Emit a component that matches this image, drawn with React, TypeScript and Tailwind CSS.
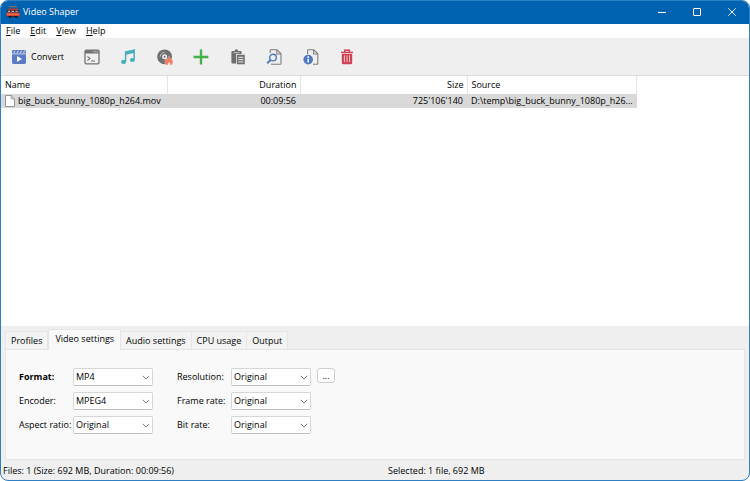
import React, { useState } from 'react';

type IconProps = { children: React.ReactNode; className?: string };

const Icon: React.FC<IconProps> = ({ children, className = '' }) => (
  <svg viewBox="0 0 16 16" fill="none" aria-hidden="true" className={`h-4 w-4 shrink-0 ${className}`}>
    {children}
  </svg>
);

const AppLogo = () => (
  <svg viewBox="0 0 14 14" aria-hidden="true" className="h-[14px] w-[14px] shrink-0">
    <path d="M3 1.6h8" stroke="#8a7464" strokeWidth="1" />
    <path d="M7 1v3" stroke="#8c5a4a" strokeWidth="1" />
    <rect x="1.5" y="3.4" width="11" height="1.8" rx="0.9" fill="#a33a2c" />
    <rect x="1" y="5" width="12" height="2.6" fill="#4a2a30" />
    <path d="M2 6.3h2M5.5 6.3h2.5M9.5 6.3h2" stroke="#a9b4bc" strokeWidth="1.2" />
    <rect x="0.5" y="7.4" width="13" height="3.8" rx="0.6" fill="#e0402f" />
    <path d="M1 9.2h12" stroke="#f0a35a" strokeWidth="0.6" />
    <rect x="1.4" y="11.2" width="11.2" height="1" fill="#29202a" />
    <circle cx="4" cy="12" r="1.1" fill="#17131a" />
    <circle cx="10" cy="12" r="1.1" fill="#17131a" />
  </svg>
);

const ConvertIcon = () => (
  <Icon>
    <path d="M1 5.2h14v8.400a1.400 1.400 0 0 1-1.400 1.400H2.400A1.400 1.400 0 0 1 1 13.600z" fill="#5b7cc4" />
    <path d="M1 4.600V2.400A1.400 1.400 0 0 1 2.400 1h11.200A1.400 1.400 0 0 1 15 2.400v2.200z" fill="#5b7cc4" />
    <path d="M1 5h14" stroke="#8ea4d6" strokeWidth="0.800" />
    <path d="M2.600 4.200l1.500-2.600M5.900 4.200l1.500-2.600M9.200 4.200l1.500-2.600M12.400 4.200l1.500-2.600" stroke="#e4e9f5" strokeWidth="0.900" />
    <path d="M6 7v5.800l5-2.900z" fill="#fff" />
  </Icon>
);

const ConsoleIcon = () => (
  <Icon>
    <rect x="1" y="1.2" width="14" height="13.6" rx="1.4" stroke="#727272" strokeWidth="1.3" />
    <path d="M1 2.6a1.4 1.4 0 0 1 1.4-1.4h11.2A1.4 1.4 0 0 1 15 2.6v2H1z" fill="#727272" />
    <path d="M9.3 2.8h1M11.3 2.8h1M13.2 2.8h.8" stroke="#efefef" strokeWidth="1" />
    <path d="M3.4 7.4l2.6 2.1-2.6 2.1M7 12h4" stroke="#727272" strokeWidth="1.1" />
  </Icon>
);

const MusicIcon = () => (
  <Icon>
    <path d="M5.6 12.6V3.2l8.6-2v9.6" stroke="#45aebd" strokeWidth="1.5" />
    <path d="M5 2.8l9.9-2.2v3.2L5 6z" fill="#45aebd" />
    <ellipse cx="3.6" cy="12.9" rx="2.6" ry="2.1" fill="#45aebd" />
    <ellipse cx="12.4" cy="11" rx="2.5" ry="2" fill="#45aebd" />
  </Icon>
);

const BurnIcon = () => (
  <Icon>
    <circle cx="7.6" cy="7.8" r="7.4" fill="#6e6e6e" />
    <path d="M3.200 7.800A4.400 4.400 0 0 1 7.600 3.400" stroke="#c4c4c4" strokeWidth="1" />
    <circle cx="7.600" cy="7.800" r="2.500" fill="#efefef" />
    <circle cx="7.600" cy="7.800" r="1" fill="#6e6e6e" />
    <path
      d="M9.300 16.200c-2.200-2.200-1.600-5 .1-6.600l.7 1.300c.2-1.900 1-3.200 2.300-4 0 1.500.5 2.400 1.200 3.200l.7-.9c1.800 2.200 2.100 5 .2 7h-1.400c.3-1.600-.1-2.500-1-3.300-1 .9-1.500 2-1.200 3.300z"
      fill="#f8785c"
      stroke="#efefef"
      strokeWidth="0.300"
    />
  </Icon>
);

const AddIcon = () => (
  <Icon>
    <path d="M8 0.600v14.800M0.600 8h14.800" stroke="#43b24b" strokeWidth="2.400" />
  </Icon>
);

const PasteIcon = () => (
  <Icon>
    <path d="M2.400 2h2.200a1.800 1.800 0 0 1 3.600 0h2.400a1 1 0 0 1 1 1v2H6v9.400H2.400a1 1 0 0 1-1-1V3a1 1 0 0 1 1-1z" fill="#6e6e6e" />
    <path d="M3.600 3.700h5.800" stroke="#d0d0d0" strokeWidth="0.900" />
    <rect x="6.600" y="5.600" width="8.400" height="10" rx="0.800" fill="#6e6e6e" stroke="#efefef" strokeWidth="0.500" />
    <path d="M8.300 8.300h5M8.300 10.600h5M8.300 12.900h5" stroke="#efefef" strokeWidth="1" />
  </Icon>
);

const PreviewIcon = () => (
  <Icon>
    <path d="M4.200 4V1.600a.8.8 0 0 1 .8-.8h6l4 4v9.600a.8.8 0 0 1-.8.8H5" stroke="#7d7d7d" strokeWidth="1.100" />
    <path d="M10.800 1v4h4" stroke="#7d7d7d" strokeWidth="1.100" />
    <circle cx="7" cy="8.600" r="3.300" fill="#efefef" stroke="#4f78c4" strokeWidth="1.400" />
    <path d="M4.600 11L1.200 14.200" stroke="#4f78c4" strokeWidth="1.900" />
  </Icon>
);

const InfoIcon = () => (
  <Icon>
    <path d="M4.600 5V1.600a.8.8 0 0 1 .8-.8h5.400l4 4v9.600a.8.8 0 0 1-.8.800h-4" stroke="#7d7d7d" strokeWidth="1.100" />
    <path d="M10.600 1v4h4" stroke="#7d7d7d" strokeWidth="1.100" />
    <circle cx="5.200" cy="10.600" r="4.800" fill="#4f78c4" />
    <path d="M5.200 9.800v3.600" stroke="#fff" strokeWidth="1.500" />
    <circle cx="5.200" cy="8" r="0.900" fill="#fff" />
  </Icon>
);

const DeleteIcon = () => (
  <Icon>
    <path d="M2 3.400h12M5.600 3V1.300h4.800V3" stroke="#ce3f50" strokeWidth="1.400" />
    <path d="M2.800 4.800h10.400v9a1.400 1.400 0 0 1-1.400 1.400H4.200a1.400 1.400 0 0 1-1.400-1.400z" fill="#ce3f50" />
    <path d="M5.400 6.400v6.800M8 6.400v6.800M10.600 6.400v6.800" stroke="#f3c9ce" strokeWidth="1" />
  </Icon>
);

const FileIcon = () => (
  <svg viewBox="0 0 10 12" aria-hidden="true" className="h-3 w-[10px] shrink-0">
    <path d="M.5.5h5.700l3.300 3.300v7.700h-9z" fill="#fff" stroke="#8a8a8a" strokeWidth="0.900" />
    <path d="M6.200.5v3.300h3.300" fill="none" stroke="#8a8a8a" strokeWidth="0.900" />
  </svg>
);

const menus = ['File', 'Edit', 'View', 'Help'];

const tools = [
  { label: 'Console', icon: <ConsoleIcon /> },
  { label: 'Extract audio', icon: <MusicIcon /> },
  { label: 'Burn disc', icon: <BurnIcon /> },
  { label: 'Add', icon: <AddIcon /> },
  { label: 'Paste', icon: <PasteIcon /> },
  { label: 'Preview', icon: <PreviewIcon /> },
  { label: 'Information', icon: <InfoIcon /> },
  { label: 'Delete', icon: <DeleteIcon /> },
];

const files = [
  {
    name: 'big_buck_bunny_1080p_h264.mov',
    duration: '00:09:56',
    size: "725'106'140",
    source: 'D:\\temp\\big_buck_bunny_1080p_h26...',
  },
];

const tabs = ['Profiles', 'Video settings', 'Audio settings', 'CPU usage', 'Output'];

type FieldProps = { id: string; label: string; value: string; bold?: boolean };

const Field: React.FC<FieldProps> = ({ id, label, value, bold }) => (
  <>
    <label htmlFor={id} className={`whitespace-nowrap ${bold ? 'font-bold' : ''}`}>
      {label}
    </label>
    <div className="relative">
      <select
        id={id}
        defaultValue={value}
        className="block h-[18px] w-full appearance-none rounded-[2px] border border-[#d6d6d6] border-b-[#c0c0c0] bg-white pl-[2px] leading-4"
      >
        <option>{value}</option>
      </select>
      <svg viewBox="0 0 8 5" fill="none" aria-hidden="true" className="pointer-events-none absolute top-[7px] right-[3px] h-[5px] w-2">
        <path d="M.8.8L4 4 7.200.8" stroke="#707070" strokeWidth="0.900" />
      </svg>
    </div>
  </>
);

const App: React.FC = () => {
  const [activeTab, setActiveTab] = useState('Video settings');

  return (
    <div className="flex min-h-screen flex-col overflow-hidden rounded-lg border border-[#2f80c2] bg-[#efefef] font-['Open_Sans','Noto_Sans',sans-serif] text-[9px] leading-3 text-black">
      {/* Title bar */}
      <header className="-mx-px -mt-px flex h-6 items-center bg-[#0063b1] pr-px pl-[6px] text-white">
        <AppLogo />
        <h1 className="ml-[3px]">Video Shaper</h1>
        <div className="ml-auto flex h-full">
          <button aria-label="Minimize" className="flex w-[35px] items-center justify-center">
            <svg viewBox="0 0 8 8" className="h-2 w-2"><path d="M0 4.500h8" stroke="#fff" /></svg>
          </button>
          <button aria-label="Maximize" className="flex w-[35px] items-center justify-center">
            <svg viewBox="0 0 8 8" fill="none" className="h-2 w-2"><rect x="0.500" y="0.500" width="7" height="7" rx="0.500" stroke="#fff" /></svg>
          </button>
          <button aria-label="Close" className="flex w-[35px] items-center justify-center">
            <svg viewBox="0 0 8 8" className="h-2 w-2"><path d="M.3.3l7.400 7.400M7.700.3L.3 7.700" stroke="#fff" strokeWidth="0.900" /></svg>
          </button>
        </div>
      </header>

      <nav className="flex h-[14px] items-center gap-[10px] bg-white pl-[5px]">
        {menus.map((menu) => (
          <button key={menu}>
            <span className="underline">{menu[0]}</span>
            {menu.slice(1)}
          </button>
        ))}
      </nav>

      {/* Toolbar */}
      <div className="flex h-[38px] items-center gap-5 border-b border-[#dcdcdc] pl-[10px]">
        <button className="flex items-center gap-1">
          <ConvertIcon />
          Convert
        </button>
        <div className="flex w-[271px] justify-between">
          {tools.map((tool) => (
            <button key={tool.label} aria-label={tool.label}>
              {tool.icon}
            </button>
          ))}
        </div>
      </div>

      {/* File list */}
      <main className="flex-1 bg-white">
        <table className="table-fixed border-collapse">
          <colgroup>
            <col className="w-[166px]" />
            <col className="w-[133px]" />
            <col className="w-[167px]" />
            <col className="w-[167px]" />
          </colgroup>
          <thead>
            <tr className="h-[18px]">
              <th className="border-r border-[#e5e5e5] px-1 text-left font-normal">Name</th>
              <th className="border-r border-[#e5e5e5] px-[3px] text-right font-normal">Duration</th>
              <th className="border-r border-[#e5e5e5] px-[3px] text-right font-normal">Size</th>
              <th className="border-r border-[#e5e5e5] px-1 text-left font-normal">Source</th>
            </tr>
          </thead>
          <tbody>
            {files.map((file) => (
              <tr key={file.name} className="h-[14px] bg-[#d9d9d9]">
                <td className="px-1">
                  <div className="flex items-center gap-[3px]">
                    <FileIcon />
                    {file.name}
                  </div>
                </td>
                <td className="px-1 text-right">{file.duration}</td>
                <td className="px-1 text-right">{file.size}</td>
                <td className="px-1 whitespace-nowrap">{file.source}</td>
              </tr>
            ))}
          </tbody>
        </table>
      </main>

      {/* Settings */}
      <section className="px-1 pt-[3px]">
        <div role="tablist" className="flex items-end">
          {tabs.map((tab) => (
            <button
              key={tab}
              role="tab"
              aria-selected={tab === activeTab}
              onClick={() => setActiveTab(tab)}
              className={
                tab === activeTab
                  ? 'relative -mb-px h-[21px] border border-b-0 border-[#e5e5e5] bg-[#f9f9f9] px-[6px] pb-[3px]'
                  : 'h-[18px] border border-b-0 border-l-0 border-[#e5e5e5] bg-[#f3f3f3] px-[5px] first:border-l'
              }
            >
              {tab}
            </button>
          ))}
        </div>
        <div role="tabpanel" className="h-[111px] border border-[#e5e5e5] bg-[#f9f9f9] px-[13px] pt-[18px]">
          <div className="flex gap-6">
            <div className="grid grid-cols-[54px_80px] items-center gap-y-[6px]">
              <Field id="format" label="Format:" value="MP4" bold />
              <Field id="encoder" label="Encoder:" value="MPEG4" />
              <Field id="aspect" label="Aspect ratio:" value="Original" />
            </div>
            <div className="grid grid-cols-[54px_80px] items-center gap-y-[6px]">
              <Field id="resolution" label="Resolution:" value="Original" />
              <Field id="frame-rate" label="Frame rate:" value="Original" />
              <Field id="bit-rate" label="Bit rate:" value="Original" />
            </div>
            <button aria-label="Custom resolution" className="-ml-[18px] h-[15px] w-[18px] rounded-[3px] border border-[#cfcfcf] bg-white leading-3">
              ...
            </button>
          </div>
        </div>
      </section>

      <footer className="grid h-5 grid-cols-[385px_1fr] items-center pt-px pl-[2px]">
        <span>Files: 1 (Size: 692 MB, Duration: 00:09:56)</span>
        <span>Selected: 1 file, 692 MB</span>
      </footer>
    </div>
  );
};

export default App;
